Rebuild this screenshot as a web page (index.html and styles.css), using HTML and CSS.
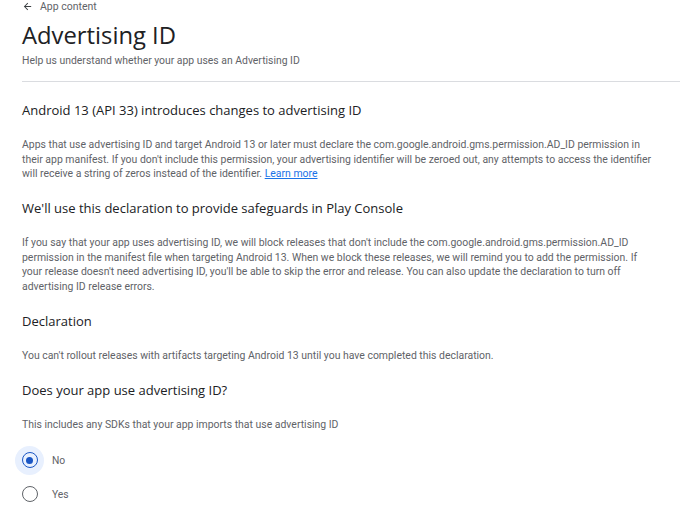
FILE: index.html
```html
<!DOCTYPE html>
<html>
<head>
<meta charset="utf-8">
<link rel="stylesheet" href="styles.css">
</head>
<body>
<div class="page">
  <div class="back"><svg class="arrow" width="11" height="11" viewBox="0 0 24 24"><path d="M20 11H7.83l5.59-5.59L12 4l-8 8 8 8 1.41-1.41L7.83 13H20v-2z" fill="#3c4043"/></svg><span>App content</span></div>
  <h1 class="title">Advertising ID</h1>
  <p class="subtitle">Help us understand whether your app uses an Advertising ID</p>
  <hr class="divider">
  <h2 class="heading">Android 13 (API 33) introduces changes to advertising ID</h2>
  <p class="body">Apps that use advertising ID and target Android 13 or later must declare the com.google.android.gms.permission.AD_ID permission in their app manifest. If you don't include this permission, your advertising identifier will be zeroed out, any attempts to access the identifier will receive a string of zeros instead of the identifier. <a class="link" href="#">Learn more</a></p>
  <h2 class="heading">We'll use this declaration to provide safeguards in Play Console</h2>
  <p class="body">If you say that your app uses advertising ID, we will block releases that don't include the com.google.android.gms.permission.AD_ID permission in the manifest file when targeting Android 13. When we block these releases, we will remind you to add the permission. If your release doesn't need advertising ID, you'll be able to skip the error and release. You can also update the declaration to turn off advertising ID release errors.</p>
  <h2 class="heading">Declaration</h2>
  <p class="body">You can't rollout releases with artifacts targeting Android 13 until you have completed this declaration.</p>
  <h2 class="heading">Does your app use advertising ID?</h2>
  <p class="body">This includes any SDKs that your app imports that use advertising ID</p>
  <div class="options">
    <label class="option"><span class="radio checked"><span class="dot"></span></span><span class="opt-label">No</span></label>
    <label class="option"><span class="radio"></span><span class="opt-label">Yes</span></label>
  </div>
</div>
</body>
</html>
```
FILE: styles.css
```css
* { box-sizing: border-box; }
html, body { margin: 0; padding: 0; background: #fff; }
body { font-family: Roboto, "Liberation Sans", sans-serif; color: #202124; }
.page { padding: 0 0 0 22px; }
.back { display: flex; align-items: center; gap: 7px; height: 12px; font-size: 10.5px; color: #5f6368; }
.arrow { display: block; }
.title { margin: 8px 0 0; font-family: "Open Sans", Roboto, sans-serif; font-weight: 400; font-size: 23.8px; line-height: 30px; color: #202124; }
.subtitle { margin: 4px 0 0; font-size: 10.4px; line-height: 14px; color: #5f6368; }
.divider { margin: 13px 0 0; border: 0; border-top: 1px solid #dadce0; }
.heading { margin: 18px 0 0; font-family: "Open Sans", Roboto, sans-serif; font-weight: 400; font-size: 13px; line-height: 20px; color: #202124; }
.body { margin: 18px 0 0; padding-right: 21.5px; font-size: 10.45px; line-height: 14.5px; color: #5f6368; }
.body + .heading { margin-top: 16.5px; }
.link { color: #1a73e8; text-decoration: underline; }
.options { margin-top: 14px; display: flex; flex-direction: column; gap: 6px; }
.option { display: flex; align-items: center; gap: 8px; height: 28px; margin-left: -7px; }
.radio { width: 29px; height: 29px; border-radius: 50%; display: flex; align-items: center; justify-content: center; position: relative; }
.radio::before { content: ""; width: 14px; height: 14px; border: 1.6px solid #5f6368; border-radius: 50%; }
.radio.checked { background: #e8f0fe; }
.radio.checked::before { border-color: #1a56c4; }
.dot { position: absolute; width: 7px; height: 7px; border-radius: 50%; background: #1a56c4; }
.opt-label { font-size: 10.3px; color: #5f6368; }
```
